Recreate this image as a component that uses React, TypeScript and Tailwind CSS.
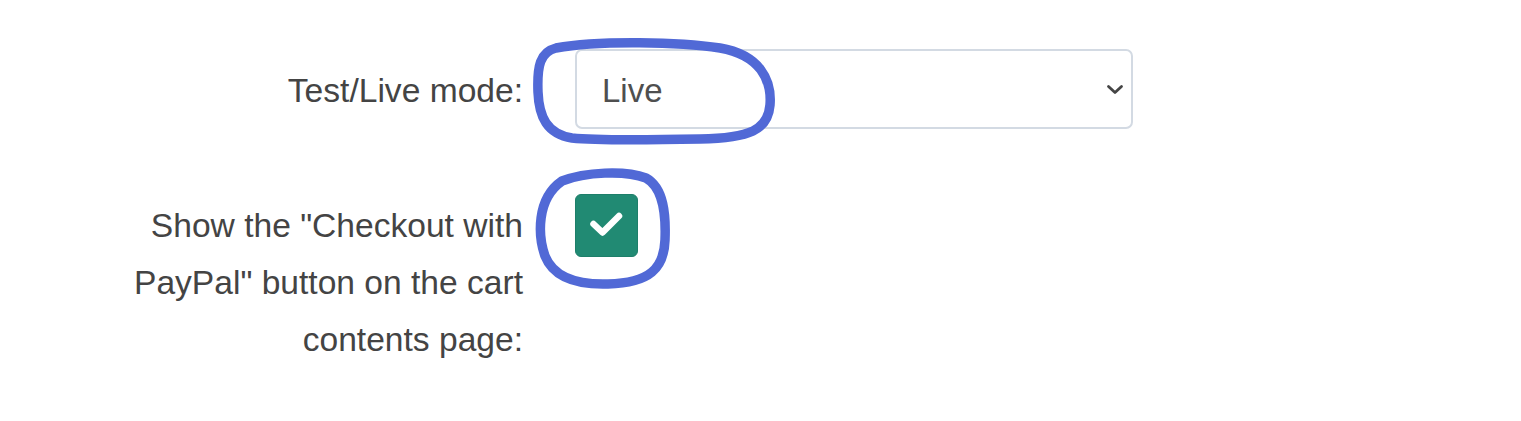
import React from "react";

export default function App() {
  return (
    <div className="relative w-[1521px] h-[421px] bg-white overflow-hidden font-['Liberation_Sans',Arial,Helvetica,sans-serif] text-[33.6px] text-[#444444]">
      <div className="flex flex-col pt-[49px] gap-[65px]">
        {/* Row 1 */}
        <div className="flex items-center">
          <label className="w-[523px] text-right leading-[57px] pt-[3px]">Test/Live mode:</label>
          <div className="relative ml-[52px] w-[558px] h-[80px]">
            <select
              defaultValue="live"
              className="appearance-none w-full h-full border-2 border-[#d3dae3] rounded-[7px] bg-white pl-[25px] pr-[40px] pt-[4px] text-[33px] text-[#4f4f4f] font-['Liberation_Sans',Arial,Helvetica,sans-serif] outline-none"
            >
              <option value="test">Test</option>
              <option value="live">Live</option>
            </select>
            <svg
              className="absolute right-[9px] top-[35px] pointer-events-none"
              width="18"
              height="12"
              viewBox="0 0 18 12"
            >
              <path d="M2.5 2.5 L9 8.5 L15.5 2.5" fill="none" stroke="#454545" strokeWidth="2.8" strokeLinecap="round" strokeLinejoin="round" />
            </svg>
          </div>
        </div>

        {/* Row 2 */}
        <div className="flex items-start">
          <div className="w-[523px] flex justify-end">
            <label className="w-[420px] text-right leading-[57px] mt-[3px]">
              Show the "Checkout with PayPal" button on the cart contents page:
            </label>
          </div>
          <div className="ml-[52px] w-[63px] h-[63px] rounded-[6px] bg-[#218a73] border border-[#1e7f6a] flex items-center justify-center">
            <svg width="63" height="63" viewBox="0 0 63 63" className="shrink-0">
              <path d="M18.5 30 L27.5 38.5 L44 22" fill="none" stroke="#ffffff" strokeWidth="6.5" strokeLinecap="round" strokeLinejoin="round" />
            </svg>
          </div>
        </div>
      </div>

      {/* Hand-drawn annotation circles */}
      <svg className="absolute inset-0 pointer-events-none" width="1521" height="421" viewBox="0 0 1521 421">
        <path
          d="M556 48 C600 40, 680 42, 720 48 C760 55, 772 80, 770 105 C768 130, 750 138, 700 139 C650 140, 600 141, 572 138 C547 134, 539 117, 538 92 C537 66, 540 52, 556 48 Z"
          fill="none"
          stroke="#5169d6"
          strokeWidth="9.5"
          strokeLinejoin="round"
        />
        <path
          d="M562 181 C585 172, 625 170, 646 178 C664 188, 666 215, 665 240 C664 268, 650 283, 608 284 C575 285, 553 276, 545 256 C538 236, 536 199, 562 181 Z"
          fill="none"
          stroke="#5169d6"
          strokeWidth="9.5"
          strokeLinejoin="round"
        />
      </svg>
    </div>
  );
}
